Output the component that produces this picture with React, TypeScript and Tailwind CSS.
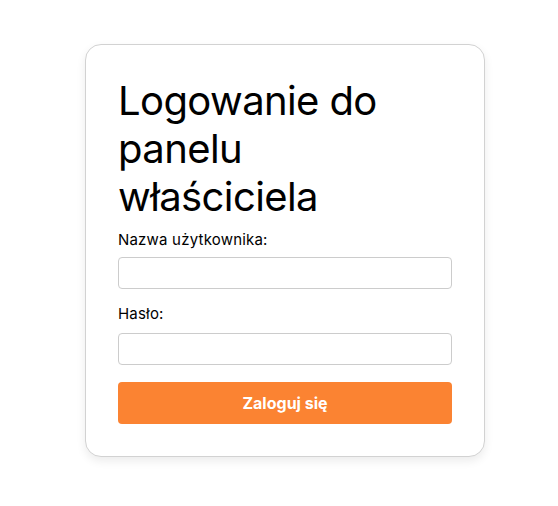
import React from 'react';

export default function App(): React.ReactNode {
  return (
    <div className="min-h-[506px] w-full bg-white pt-[44px] pl-[85px] font-['Inter','Noto_Sans',sans-serif] text-black">
      <div className="w-[400px] rounded-2xl border border-[#d2d2d2] bg-white p-8 shadow-[0_4px_10px_rgba(0,0,0,0.08)]">
        <h1 className="text-[40px] leading-[48px] font-normal tracking-[-0.6px]">
          Logowanie do
          <br />
          panelu
          <br />
          właściciela
        </h1>

        <form className="mt-2 flex flex-col" onSubmit={e => e.preventDefault()}>
          <label htmlFor="username" className="text-[15px] leading-[22px] tracking-[0.2px]">Nazwa użytkownika:</label>
          <input
            id="username"
            type="text"
            className="mt-[6px] h-8 w-full rounded border border-[#cccccc] bg-white px-2 text-[15px] outline-none"
          />

          <label htmlFor="password" className="mt-[14px] text-[15px] leading-[22px] tracking-[0.2px]">Hasło:</label>
          <input
            id="password"
            type="password"
            className="mt-2 h-8 w-full rounded border border-[#cccccc] bg-white px-2 text-[15px] outline-none"
          />

          <button
            type="submit"
            className="mt-[17px] h-[42px] w-full rounded bg-[#fb8332] text-[16px] font-bold text-white"
          >
            Zaloguj się
          </button>
        </form>
      </div>
    </div>
  );
}
